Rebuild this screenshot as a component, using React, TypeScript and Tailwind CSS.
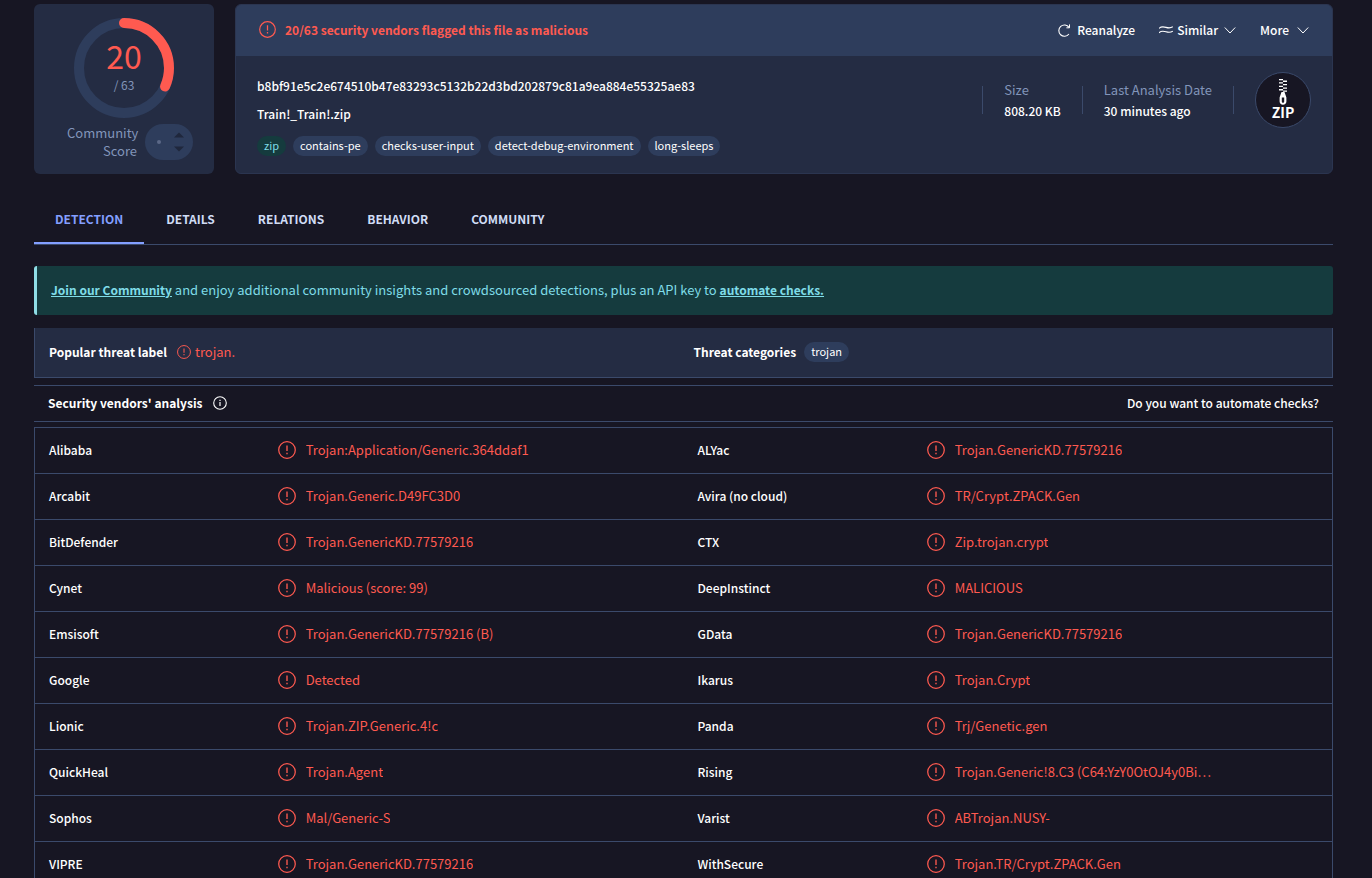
import type { ReactNode } from "react";

type Detection = { vendor: string; verdict: string };

const detections: [Detection, Detection][] = [
  [
    { vendor: "Alibaba", verdict: "Trojan:Application/Generic.364ddaf1" },
    { vendor: "ALYac", verdict: "Trojan.GenericKD.77579216" },
  ],
  [
    { vendor: "Arcabit", verdict: "Trojan.Generic.D49FC3D0" },
    { vendor: "Avira (no cloud)", verdict: "TR/Crypt.ZPACK.Gen" },
  ],
  [
    { vendor: "BitDefender", verdict: "Trojan.GenericKD.77579216" },
    { vendor: "CTX", verdict: "Zip.trojan.crypt" },
  ],
  [
    { vendor: "Cynet", verdict: "Malicious (score: 99)" },
    { vendor: "DeepInstinct", verdict: "MALICIOUS" },
  ],
  [
    { vendor: "Emsisoft", verdict: "Trojan.GenericKD.77579216 (B)" },
    { vendor: "GData", verdict: "Trojan.GenericKD.77579216" },
  ],
  [
    { vendor: "Google", verdict: "Detected" },
    { vendor: "Ikarus", verdict: "Trojan.Crypt" },
  ],
  [
    { vendor: "Lionic", verdict: "Trojan.ZIP.Generic.4!c" },
    { vendor: "Panda", verdict: "Trj/Genetic.gen" },
  ],
  [
    { vendor: "QuickHeal", verdict: "Trojan.Agent" },
    { vendor: "Rising", verdict: "Trojan.Generic!8.C3 (C64:YzY0OtOJ4y0Bi…" },
  ],
  [
    { vendor: "Sophos", verdict: "Mal/Generic-S" },
    { vendor: "Varist", verdict: "ABTrojan.NUSY-" },
  ],
  [
    { vendor: "VIPRE", verdict: "Trojan.GenericKD.77579216" },
    { vendor: "WithSecure", verdict: "Trojan.TR/Crypt.ZPACK.Gen" },
  ],
];

const tags = ["contains-pe", "checks-user-input", "detect-debug-environment", "long-sleeps"];
const tabs = ["DETECTION", "DETAILS", "RELATIONS", "BEHAVIOR", "COMMUNITY"];

function AlertIcon({ className }: { className: string }) {
  return (
    <svg viewBox="0 0 20 20" fill="none" stroke="currentColor" className={`shrink-0 text-[#ff5a50] ${className}`} aria-hidden="true">
      <circle cx="10" cy="10" r="9.2" strokeWidth="1.4" />
      <path d="M10 5v6.2" strokeWidth="1.5" />
      <path d="M10 13v1.6" strokeWidth="1.5" />
    </svg>
  );
}

function InfoIcon() {
  return (
    <svg viewBox="0 0 16 16" fill="none" stroke="currentColor" className="size-4" aria-hidden="true">
      <circle cx="8" cy="8" r="6.3" strokeWidth="1.1" />
      <path d="M8 7v4M8 4.700v1.300" strokeWidth="1.200" />
    </svg>
  );
}

function ChevronIcon() {
  return (
    <svg viewBox="0 0 12 12" fill="none" stroke="currentColor" className="size-3" aria-hidden="true">
      <path d="M.8 3.500 6 9l5.200-5.500" />
    </svg>
  );
}

function Tag({ children, green }: { children: ReactNode; green?: boolean }) {
  return (
    <a
      href="#tag"
      className={`flex h-5 items-center rounded-full px-[7px] pb-0.5 text-[11px] leading-4 font-normal ${
        green ? "bg-[#153b3e] text-[#7fdce8]" : "bg-[#2e3d5c] text-white"
      }`}
    >
      {children}
    </a>
  );
}

function ScoreCard() {
  return (
    <section className="flex w-[180px] shrink-0 flex-col items-center rounded-md bg-[#242c43] pt-3.5">
      <div className="grid size-[100px] place-items-center">
        <svg viewBox="0 0 100 100" fill="none" strokeWidth="10" className="col-start-1 row-start-1 size-[100px]" aria-hidden="true">
          <circle cx="50" cy="50" r="45" stroke="#2e3d5c" />
          <circle
            cx="50"
            cy="50"
            r="45"
            stroke="#ff5a50"
            strokeLinecap="round"
            pathLength="63"
            strokeDasharray="20 63"
            transform="rotate(-90 50 50)"
          />
        </svg>
        <div className="col-start-1 row-start-1 pb-1.5 text-center text-[#8295ba]">
          <div className="text-[32px] leading-10 text-[#ff5a50]">20</div>
          <div className="text-xs leading-5">/ 63</div>
        </div>
      </div>
      <div className="mt-1.5 flex items-center gap-2 pl-3">
        <div className="w-[70px] text-right text-[13px] leading-[18px] text-[#8295ba]">Community Score</div>
        <div className="flex h-9 w-12 items-center justify-end gap-3 rounded-full bg-[#2e3d5c] pr-2">
          <span className="size-1 rounded-full bg-[#5b6887]" />
          <div className="flex flex-col gap-2">
            <button type="button" aria-label="Vote up">
              <svg viewBox="0 0 12 6" className="h-1.5 w-3 fill-[#1f273c]"><path d="M6 .5 11 5.5H1z" /></svg>
            </button>
            <button type="button" aria-label="Vote down">
              <svg viewBox="0 0 12 6" className="h-1.5 w-3 fill-[#1f273c]"><path d="M6 5.5 11 .5H1z" /></svg>
            </button>
          </div>
        </div>
      </div>
    </section>
  );
}

function FileCard() {
  return (
    <section className="flex-1 overflow-hidden rounded-md border border-[#2b3550] bg-[#242c43] text-xs">
      <div className="flex h-[51px] items-center justify-between bg-[#2e3d5c] px-[23px] pb-0.5">
        <div className="flex items-center gap-[9px] font-bold text-[#ff5a50]">
          <AlertIcon className="size-[17px]" />
          20/63 security vendors flagged this file as malicious
        </div>
        <div className="flex items-center gap-6 font-medium text-white">
          <button type="button" className="flex items-center gap-1.5">
            <svg viewBox="0 0 14 14" fill="none" stroke="currentColor" className="size-3.5" aria-hidden="true">
              <path d="M11.900 11A5.600 5.600 0 1 1 12 4.400" strokeWidth="1.100" />
              <path d="M12.500 1.400v3.400H9.400" strokeWidth="1" />
            </svg>
            Reanalyze
          </button>
          <button type="button" className="flex items-center gap-1">
            <svg viewBox="0 0 14 14" fill="none" stroke="currentColor" strokeWidth="1.100" className="size-3.5" aria-hidden="true">
              <path d="M0 5.400C2 3.400 4.300 3.600 7 4.400S12 5 13.800 3.800M0 9.800C2 7.800 4.300 8 7 8.800S12 9.400 13.800 8.200" />
            </svg>
            <span className="pr-0.5">Similar</span>
            <ChevronIcon />
          </button>
          <button type="button" className="flex items-center gap-2">
            More
            <ChevronIcon />
          </button>
        </div>
      </div>
      <div className="flex items-start justify-between pt-4 pr-[21px] pb-[17px] pl-[21px]">
        <div className="font-medium text-white">
          <div className="leading-7">b8bf91e5c2e674510b47e83293c5132b22d3bd202879c81a9ea884e55325ae83</div>
          <div className="leading-7">Train!_Train!.zip</div>
          <div className="mt-2 flex gap-[7px]">
            <Tag green>zip</Tag>
            {tags.map((tag) => (
              <Tag key={tag}>{tag}</Tag>
            ))}
          </div>
        </div>
        <div className="flex items-center leading-[21px] font-medium text-white">
          <div className="h-7 border-l border-[#3b4a6b]" />
          <div className="px-[21px]">
            <div className="text-[13px] leading-[21px] font-normal text-[#8295ba]">Size</div>
            <div>808.20 KB</div>
          </div>
          <div className="h-7 border-l border-[#3b4a6b]" />
          <div className="px-[21px]">
            <div className="text-[13px] leading-[21px] font-normal text-[#8295ba]">Last Analysis Date</div>
            <div>30 minutes ago</div>
          </div>
          <div className="h-7 border-l border-[#3b4a6b]" />
          <div className="ml-[21px] flex size-14 flex-col items-center rounded-full border border-[#3b4a6b] bg-[#171623] pt-[5px]">
            <svg viewBox="0 0 12 27" className="h-[27px] w-3 fill-white" aria-hidden="true">
              <path d="M2 1h4v1.300H2zM6 2.600h4v1.300H6zM2 4.300h4v1.300H2zM6 6h4v1.300H6zM2 7.700h4v1.300H2zM6 9.400h4v1.300H6zM2 11.100h4v1.300H2zM6 12.500h4v1.200H6z" />
              <path fillRule="evenodd" d="M4.500 14h3l1.900 5.500v4c0 1.900-1.400 3.200-3.400 3.200s-3.400-1.300-3.400-3.200v-4zM4.800 19.500v4c0 1.700 2.400 1.700 2.400 0v-4z" />
            </svg>
            <span className="text-sm leading-[14px] font-bold">ZIP</span>
          </div>
        </div>
      </div>
    </section>
  );
}

function DetectionCells({ vendor, verdict }: Detection) {
  return (
    <>
      <td className="h-[46px] px-3.5 pb-0.5 text-xs font-medium text-white">{vendor}</td>
      <td className="px-4 pb-0.5 text-[#ff5a50]">
        <span className="flex items-center gap-2.5">
          <AlertIcon className="size-[18px]" />
          <span className="truncate">{verdict}</span>
        </span>
      </td>
    </>
  );
}

export default function App() {
  return (
    <main className="min-h-screen bg-[#171623] pt-1 pr-[39px] pl-[34px] font-['Noto_Sans_CJK_SC','Noto_Sans',sans-serif] text-[13px] leading-5">
      <div className="flex gap-[21px]">
        <ScoreCard />
        <FileCard />
      </div>

      <nav className="mt-5 flex gap-px border-b border-[#3b4a6b] text-xs leading-5 font-bold">
        {tabs.map((tab) => (
          <a
            key={tab}
            href={`#${tab.toLowerCase()}`}
            className={`border-b-2 px-[21px] pt-[15px] pb-[13px] ${
              tab === "DETECTION" ? "border-[#839fff] text-[#839fff]" : "border-transparent text-[#d0dcf5]"
            }`}
          >
            {tab}
          </a>
        ))}
      </nav>

      <p className="mt-[21px] rounded-[3px] border-l-3 border-[#8fdde6] bg-[#153b3e] px-3.5 pt-[13px] pb-[15px] leading-[21px] text-[#7fdce8]">
        <a href="#join" className="text-xs font-bold underline">Join our Community</a> and enjoy additional community insights and
        crowdsourced detections, plus an API key to <a href="#automate" className="text-xs font-bold underline">automate checks.</a>
      </p>

      <section className="mt-[13px] grid h-[50px] grid-cols-2 items-center border-x border-b border-[#3b4a6b] bg-[#242c43] px-3.5 pb-0.5 text-xs font-bold text-white">
        <div className="flex items-center gap-2.5">
          Popular threat label
          <span className="flex items-center gap-1 text-[13px] leading-5 font-normal text-[#ff5a50]">
            <AlertIcon className="size-3.5" />
            trojan.
          </span>
        </div>
        <div className="flex items-center gap-2 pl-2.5">
          Threat categories
          <Tag>trojan</Tag>
        </div>
      </section>

      <div className="mt-[7px] flex h-[37px] items-center justify-between border-y border-[#3b4a6b] px-3.5 pb-0.5 text-xs text-white">
        <h2 className="flex items-center gap-2.5 font-bold">
          Security vendors&apos; analysis
          <InfoIcon />
        </h2>
        <a href="#automate" className="font-medium">Do you want to automate checks?</a>
      </div>

      <table className="mt-[5px] w-full table-fixed border-collapse border border-[#3b4a6b]">
        <colgroup>
          <col className="w-[17.5%]" />
          <col className="w-[32.5%]" />
          <col className="w-[17.5%]" />
          <col className="w-[32.5%]" />
        </colgroup>
        <tbody>
          {detections.map(([left, right]) => (
            <tr key={left.vendor} className="border-b border-[#3b4a6b]">
              <DetectionCells {...left} />
              <DetectionCells {...right} />
            </tr>
          ))}
        </tbody>
      </table>
    </main>
  );
}
